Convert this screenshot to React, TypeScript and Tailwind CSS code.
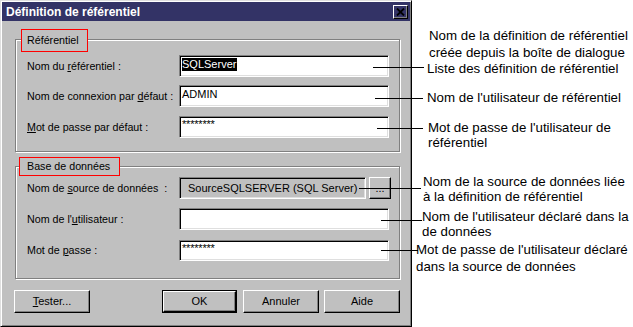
import React from 'react'

const sunken =
  'border border-t-[#808080] border-l-[#808080] border-b-white border-r-white shadow-[inset_1px_1px_0_#000,inset_-1px_-1px_0_#dfdfdf]'
const raised =
  'border border-t-white border-l-white border-b-black border-r-black shadow-[inset_-1px_-1px_0_#808080]'

function Field({ className, children }: { className: string; children?: React.ReactNode }) {
  return <div className={`${sunken} ${className} flex items-start pt-[2px] pl-[2px] leading-[13px] text-[11px]`}>{children}</div>
}

function Row({ label, className, children }: { label: React.ReactNode; className: string; children: React.ReactNode }) {
  return (
    <div className={`flex items-center ${className}`}>
      <div className="w-[163px] pl-[11px] whitespace-nowrap">{label}</div>
      {children}
    </div>
  )
}

function Stars() {
  return <span className="text-[11px] leading-[11px] tracking-[-0.2px]">********</span>
}

function Button({ children, className }: { children: React.ReactNode; className: string }) {
  return (
    <div className={`${raised} ${className} h-[23px] flex items-center justify-center`}>
      {children}
    </div>
  )
}

export default function App() {
  return (
    <div className="relative w-[633px] h-[327px] overflow-hidden bg-white flex font-['Liberation_Sans',Arial,sans-serif] text-black">
      {/* dialog */}
      <div className="w-[412px] h-[327px] shrink-0 bg-[#c0c0c0] border border-t-[#dfdfdf] border-l-[#dfdfdf] border-b-black border-r-black shadow-[inset_1px_1px_0_#fff,inset_-1px_-1px_0_#808080] p-[1px] flex flex-col text-[10.7px]">
        <div className="h-[19px] bg-[#333366] flex items-center justify-between pl-[4px] pr-[2px]">
          <span className="text-white font-bold text-[12px]">Définition de référentiel</span>
          <div className={`${raised} w-[15px] h-[14px] flex items-center justify-center`}>
            <svg width="9" height="8" viewBox="0 0 9 8">
              <path d="M1 0.5 L8 7.5 M8 0.5 L1 7.5" stroke="#000" strokeWidth="1.8" />
            </svg>
          </div>
        </div>

        {/* group 1 */}
        <div className="relative ml-[13px] mt-[18px] w-[385px] h-[113px] border border-[#808080] shadow-[inset_1px_1px_0_#fff,1px_1px_0_#fff] flex flex-col">
          <div className="absolute -top-[11px] left-[5px] w-[67px] h-[23px] bg-[#c0c0c0] border border-[#ff0000] pl-[5px] flex items-center">
            Référentiel
          </div>
          <Row className="mt-[15px]" label={<>Nom du <u>r</u>éférentiel :</>}>
            <Field className="w-[210px] h-[22px] bg-white">
              <span className="bg-black text-white pr-[1px]">SQLServer</span>
            </Field>
          </Row>
          <Row className="mt-[8px]" label={<>Nom de connexion par <u>d</u>éfaut :</>}>
            <Field className="w-[210px] h-[22px] bg-white">
              <span>ADMIN</span>
            </Field>
          </Row>
          <Row className="mt-[9px]" label={<><u>M</u>ot de passe par défaut :</>}>
            <Field className="w-[210px] h-[22px] bg-white">
              <Stars />
            </Field>
          </Row>
        </div>

        {/* group 2 */}
        <div className="relative ml-[13px] mt-[14px] w-[385px] h-[113px] border border-[#808080] shadow-[inset_1px_1px_0_#fff,1px_1px_0_#fff] flex flex-col">
          <div className="absolute -top-[10px] left-[3px] w-[101px] h-[19px] bg-[#c0c0c0] border border-[#ff0000] pl-[7px] flex items-center">
            Base de données
          </div>
          <Row className="mt-[10px]" label={<>Nom de <u>s</u>ource de données&nbsp; :</>}>
            <div className={`${sunken} w-[187px] h-[22px] bg-[#c0c0c0] flex items-center pl-[8px] whitespace-nowrap text-[11px]`}>
              SourceSQLSERVER (SQL Server)
            </div>
            <Button className="ml-[3px] w-[22px] !h-[22px]">
              <span className="leading-none">...</span>
            </Button>
          </Row>
          <Row className="mt-[9px]" label={<>Nom de l'<u>u</u>tilisateur :</>}>
            <Field className="w-[210px] h-[22px] bg-white" />
          </Row>
          <Row className="mt-[10px]" label={<>Mot de <u>p</u>asse :</>}>
            <Field className="w-[210px] h-[21px] bg-white">
              <Stars />
            </Field>
          </Row>
        </div>

        {/* buttons */}
        <div className="flex mt-[11px] text-[11px]">
          <Button className="ml-[12px] w-[76px]">
            <span><u>T</u>ester...</span>
          </Button>
          <div className="ml-[72px] w-[75px] h-[23px] border border-black">
            <div className={`${raised} w-full h-full flex items-center justify-center`}>OK</div>
          </div>
          <Button className="ml-[6px] w-[76px]">Annuler</Button>
          <Button className="ml-[5px] w-[76px]">Aide</Button>
        </div>
      </div>

      {/* annotations */}
      <div className="flex flex-col text-[13.3px] whitespace-nowrap">
        <div className="mt-[28px] leading-[16.5px]">
          <div className="ml-[17px]">Nom de la définition de référentiel</div>
          <div className="ml-[17px]">créée depuis la boîte de dialogue</div>
          <div className="ml-[15px]">Liste des définition de référentiel</div>
        </div>
        <div className="mt-[12.5px] leading-[16px] ml-[15px]">Nom de l'utilisateur de référentiel</div>
        <div className="mt-[14px] leading-[15px] ml-[16px]">
          <div>Mot de passe de l'utilisateur de</div>
          <div>référentiel</div>
        </div>
        <div className="mt-[24px] leading-[15px] ml-[11px]">
          <div>Nom de la source de données liée</div>
          <div>à la définition de référentiel</div>
        </div>
        <div className="mt-[5px] leading-[15px] ml-[10px]">
          <div>Nom de l'utilisateur déclaré dans la</div>
          <div>de données</div>
        </div>
        <div className="mt-[2px] leading-[17px] ml-[4px]">
          <div>Mot de passe de l'utilisateur déclaré</div>
          <div>dans la source de données</div>
        </div>
      </div>

      {/* leader lines */}
      <svg className="absolute left-0 top-0 pointer-events-none" width="633" height="327">
        <g stroke="#000" strokeWidth="1">
          <line x1="373" y1="67.5" x2="424" y2="67.5" />
          <line x1="375" y1="98.5" x2="423" y2="98.5" />
          <line x1="377" y1="128.5" x2="423" y2="128.5" />
          <line x1="359" y1="188.5" x2="421" y2="188.5" />
          <line x1="381" y1="220.5" x2="422" y2="220.5" />
          <line x1="381" y1="250.5" x2="418" y2="250.5" />
        </g>
      </svg>
    </div>
  )
}
